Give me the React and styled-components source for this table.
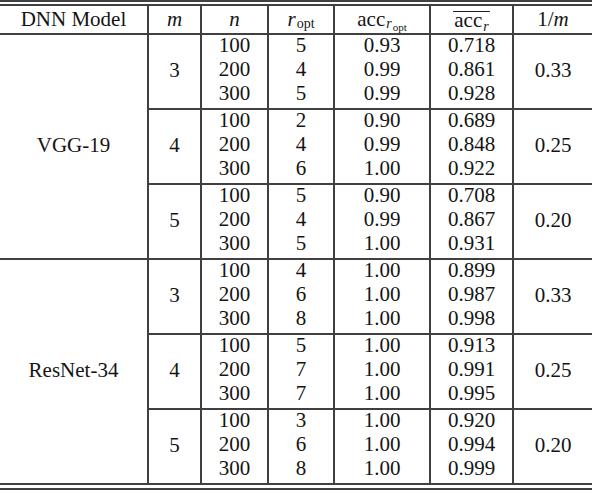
import React from "react";
import styled, { createGlobalStyle } from "styled-components";

const LINE = "#404040";
const FONT = `"Liberation Serif", "Times New Roman", serif`;

const Global = createGlobalStyle`
  html, body { margin: 0; padding: 0; background: #fff; }
  body {
    font-family: ${FONT};
    color: #141414;
  }
`;

const COLS = "149px 53px 67px 66px 96px 83px 78px";
const GROUP_COLS = "53px 67px 66px 96px 83px 78px";

const Outer = styled.div`
  width: 592px;
  font-family: ${FONT};
  border-top: 2px solid ${LINE};
  padding: 2px 0 3px;
  border-bottom: 2px solid ${LINE};
`;

const Inner = styled.div`
  border-top: 2px solid ${LINE};
`;

const HeaderRow = styled.div`
  display: grid;
  grid-template-columns: ${COLS};
  height: 29px;
  border-bottom: 2px solid ${LINE};
  box-sizing: border-box;
`;

const HeadCell = styled.div`
  display: flex;
  align-items: center;
  justify-content: center;
  font-size: 21px;
  line-height: 27px;
  white-space: nowrap;
  border-right: ${(p) => (p.$last ? "none" : `2px solid ${LINE}`)};
`;

const I = styled.i`
  font-style: italic;
`;

const Sub = styled.span`
  font-style: normal;
  font-size: ${(p) => p.$size || 14}px;
  position: relative;
  top: ${(p) => p.$shift || 4}px;
  line-height: 0;
  margin-left: 1px;
`;

const Over = styled.span`
  display: inline-block;
  line-height: 16px;
  border-top: 1.5px solid #222;
  padding: 0 1px;
`;

const ModelBlock = styled.div`
  display: grid;
  grid-template-columns: 149px 1fr;
  border-bottom: 2px solid ${LINE};
`;

const ModelName = styled.div`
  display: flex;
  align-items: center;
  justify-content: center;
  font-size: 21px;
  padding-bottom: 2px;
  border-right: 2px solid ${LINE};
`;

const Group = styled.div`
  display: grid;
  grid-template-columns: ${GROUP_COLS};
  grid-template-rows: 24px 24px 25px;
  border-bottom: ${(p) => (p.$last ? "none" : `2px solid ${LINE}`)};
`;

const Cell = styled.div`
  text-align: center;
  font-size: 21px;
  line-height: 20px;
  border-right: 2px solid ${LINE};
`;

const SpanCell = styled.div`
  grid-row: 1 / span 3;
  grid-column: ${(p) => p.$col};
  display: flex;
  align-items: center;
  justify-content: center;
  padding-bottom: 3px;
  font-size: 21px;
  line-height: 20px;
  border-right: ${(p) => (p.$last ? "none" : `2px solid ${LINE}`)};
`;

const data = [
  {
    name: "VGG-19",
    groups: [
      { m: 3, inv: "0.33", rows: [["100", "5", "0.93", "0.718"], ["200", "4", "0.99", "0.861"], ["300", "5", "0.99", "0.928"]] },
      { m: 4, inv: "0.25", rows: [["100", "2", "0.90", "0.689"], ["200", "4", "0.99", "0.848"], ["300", "6", "1.00", "0.922"]] },
      { m: 5, inv: "0.20", rows: [["100", "5", "0.90", "0.708"], ["200", "4", "0.99", "0.867"], ["300", "5", "1.00", "0.931"]] },
    ],
  },
  {
    name: "ResNet-34",
    groups: [
      { m: 3, inv: "0.33", rows: [["100", "4", "1.00", "0.899"], ["200", "6", "1.00", "0.987"], ["300", "8", "1.00", "0.998"]] },
      { m: 4, inv: "0.25", rows: [["100", "5", "1.00", "0.913"], ["200", "7", "1.00", "0.991"], ["300", "7", "1.00", "0.995"]] },
      { m: 5, inv: "0.20", rows: [["100", "3", "1.00", "0.920"], ["200", "6", "1.00", "0.994"], ["300", "8", "1.00", "0.999"]] },
    ],
  },
];

export default function App() {
  return (
    <>
      <Global />
      <Outer>
        <Inner>
          <HeaderRow>
            <HeadCell>DNN Model</HeadCell>
            <HeadCell><I>m</I></HeadCell>
            <HeadCell><I>n</I></HeadCell>
            <HeadCell>
              <I>r</I>
              <Sub>opt</Sub>
            </HeadCell>
            <HeadCell>
              acc
              <Sub>
                <I>r</I>
                <Sub $size={11} $shift={3}>opt</Sub>
              </Sub>
            </HeadCell>
            <HeadCell>
              <Over>
                acc<Sub><I>r</I></Sub>
              </Over>
            </HeadCell>
            <HeadCell $last>
              1/<I>m</I>
            </HeadCell>
          </HeaderRow>
          {data.map((model) => (
            <ModelBlock key={model.name}>
              <ModelName>{model.name}</ModelName>
              <div>
                {model.groups.map((g, gi) => (
                  <Group key={g.m} $last={gi === model.groups.length - 1}>
                    <SpanCell $col={1}>{g.m}</SpanCell>
                    {g.rows.map((r) =>
                      r.map((v, ci) => <Cell key={r[0] + ci}>{v}</Cell>)
                    )}
                    <SpanCell $col={6} $last>{g.inv}</SpanCell>
                  </Group>
                ))}
              </div>
            </ModelBlock>
          ))}
        </Inner>
      </Outer>
    </>
  );
}
